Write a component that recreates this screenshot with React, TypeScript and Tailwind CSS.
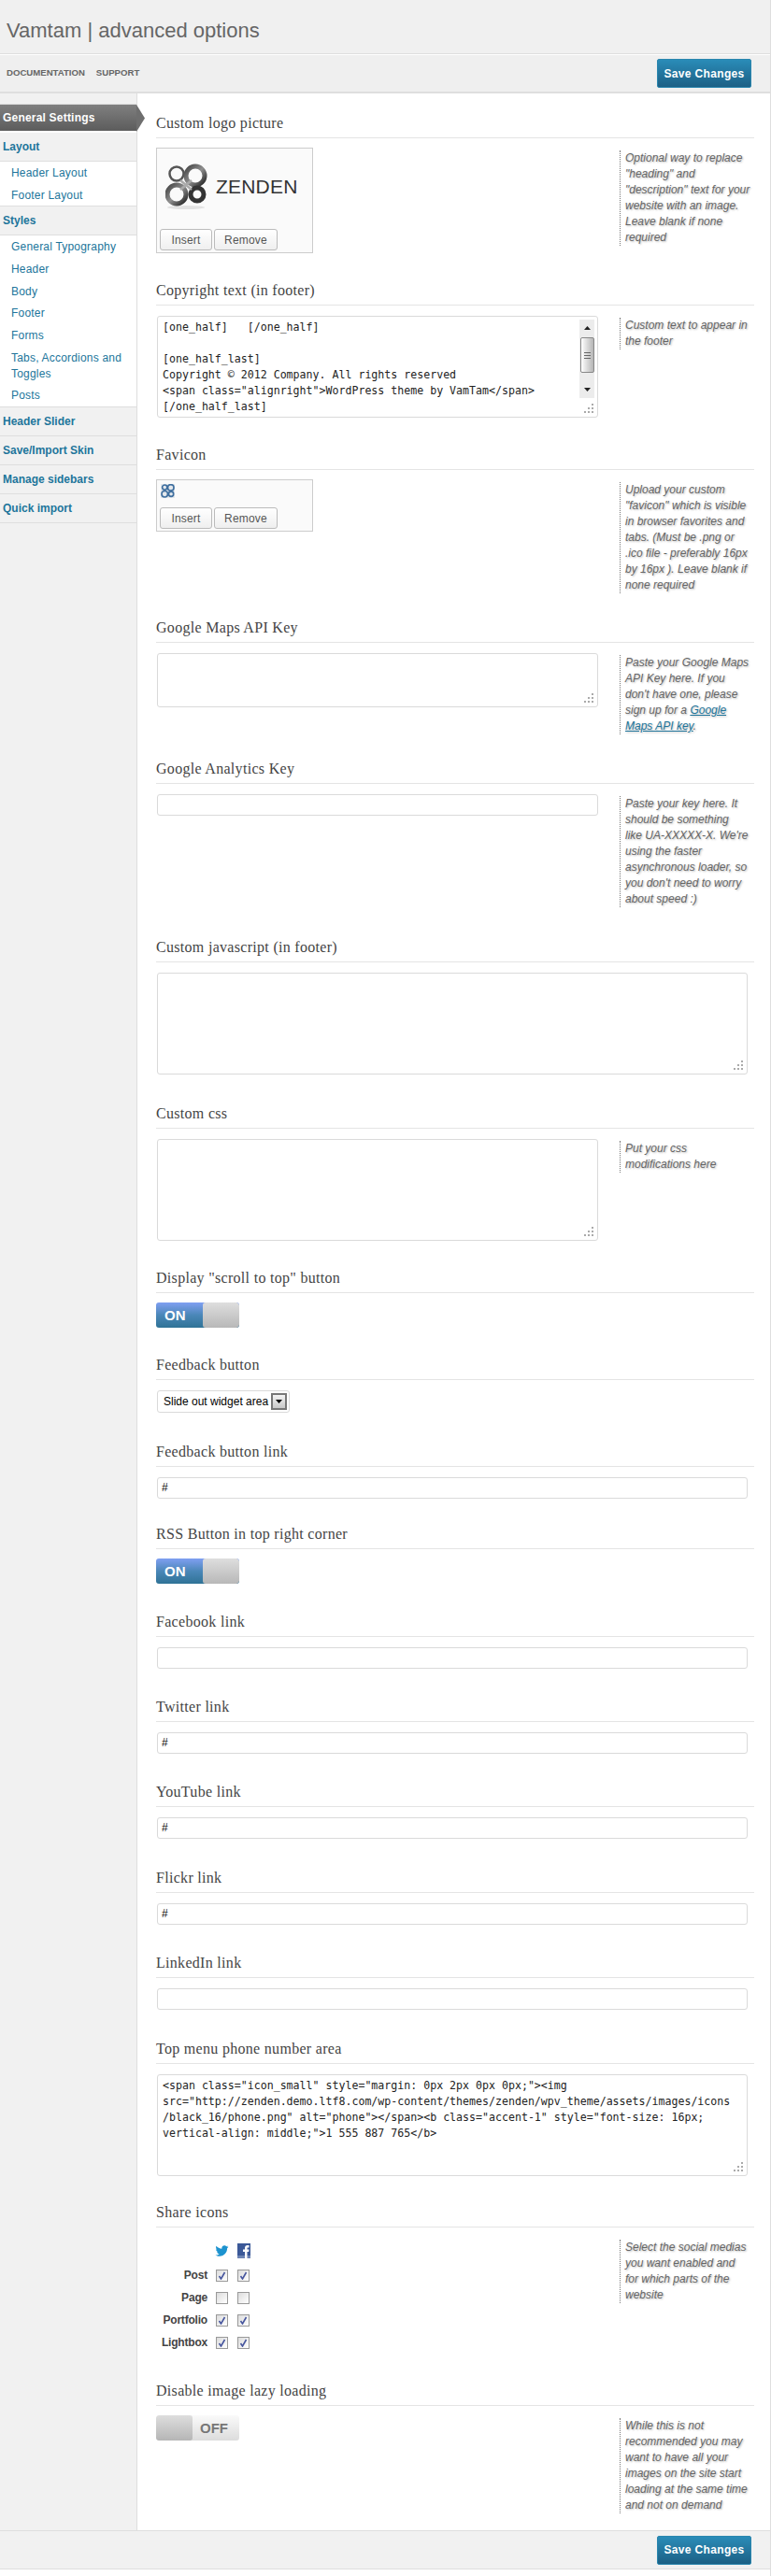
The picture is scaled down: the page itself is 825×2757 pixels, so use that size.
import type { ReactNode } from "react"
import { FaTwitter } from "react-icons/fa"

const SANS = "font-['Liberation_Sans',Arial,sans-serif]"

function Grip() {
  return (
    <svg className="absolute right-[4px] bottom-[4px]" width="10" height="10" viewBox="0 0 10 10">
      <g fill="#aaa">
        <rect x="8" y="0" width="2" height="2" />
        <rect x="8" y="4" width="2" height="2" />
        <rect x="4" y="4" width="2" height="2" />
        <rect x="8" y="8" width="2" height="2" />
        <rect x="4" y="8" width="2" height="2" />
        <rect x="0" y="8" width="2" height="2" />
      </g>
    </svg>
  )
}

function KnotMark({ small }: { small?: boolean }) {
  if (small) {
    return (
      <svg width="15" height="15" viewBox="0 0 44 46" className="bg-[#e4e8ec]">
        <g fill="none" stroke="#3f6f9f" strokeWidth="5">
          <circle cx="12" cy="11" r="8" />
          <circle cx="32" cy="12" r="10" />
          <circle cx="12" cy="33" r="10" />
          <circle cx="33" cy="33" r="8" />
        </g>
      </svg>
    )
  }
  return (
    <svg width="46" height="50" viewBox="0 0 46 50">
      <defs>
        <linearGradient id="knot" x1="0" y1="0" x2="1" y2="1">
          <stop offset="0" stopColor="#444" />
          <stop offset="0.5" stopColor="#8f8f8f" />
          <stop offset="1" stopColor="#222" />
        </linearGradient>
      </defs>
      <ellipse cx="22" cy="47" rx="20" ry="2" fill="#e2e2e2" />
      <g fill="none">
        <circle cx="12" cy="11" r="7.5" stroke="#555" strokeWidth="2.5" />
        <circle cx="32" cy="13" r="10" stroke="url(#knot)" strokeWidth="5" />
        <circle cx="12" cy="33" r="10" stroke="url(#knot)" strokeWidth="5" />
        <circle cx="34" cy="33" r="7" stroke="#333" strokeWidth="5" />
        <path d="M16 18 L28 28 M28 18 L16 28" stroke="#aaa" strokeWidth="2.5" />
      </g>
    </svg>
  )
}

function FacebookMark() {
  return (
    <svg width="14" height="16" viewBox="0 0 14 16" className="ml-[9px]">
      <rect width="14" height="16" fill="#3b5998" />
      <rect y="13" width="14" height="3" fill="#6d84b4" />
      <path d="M8 16 V9 H6 V6.5 H8 V5 C8 3 9 2 11 2 H12.5 V4.5 H11.3 C10.6 4.5 10.5 4.8 10.5 5.4 V6.5 H12.5 L12.2 9 H10.5 V16 Z" fill="#fff" />
    </svg>
  )
}

function SaveButton() {
  return (
    <button className="h-[31px] w-[101px] rounded-[2px] border border-[#2a86ae] bg-gradient-to-b from-[#2a8cb8] to-[#1c6085] text-center text-[12px] font-bold tracking-[0.35px] text-white">
      Save Changes
    </button>
  )
}

function Desc({ children }: { children: ReactNode }) {
  return (
    <div className="mt-[2px] w-[144px] shrink-0 self-start border-l border-dotted border-[#777] pl-[5px] text-[12px] leading-[17px] whitespace-pre-line text-[#666] italic [text-shadow:1px_1px_2px_#bbb]">
      {children}
    </div>
  )
}

function Section({ title, bodyClass, children, desc }: { title: string; bodyClass: string; children?: ReactNode; desc?: ReactNode }) {
  return (
    <section>
      <h3 className="flex h-[36px] items-end border-b border-[#e4e4e4] pb-[5px] font-['Liberation_Serif',serif] text-[16px] leading-[20px] tracking-[0.3px] text-[#444]">
        {title}
      </h3>
      <div className={`flex pt-[11px] ${bodyClass}`}>
        <div className={desc ? "w-[496px] shrink-0" : "w-full"}>{children}</div>
        {desc && <Desc>{desc}</Desc>}
      </div>
    </section>
  )
}

function TextBox({ className, lines, children }: { className: string; lines?: string[]; children?: ReactNode }) {
  return (
    <div className={`relative ml-px overflow-hidden rounded-[3px] border border-[#dadada] bg-white px-[5px] pt-[3px] font-['DejaVu_Sans_Mono',monospace] text-[11.6px] leading-[17px] whitespace-pre text-[#222] ${className}`}>
      {lines?.map((line, i) => (
        <div key={i} className="h-[17px]">{line}</div>
      ))}
      {children}
      <Grip />
    </div>
  )
}

function TextInput({ value, short }: { value?: string; short?: boolean }) {
  return (
    <div className={`ml-px h-[23px] rounded-[3px] border border-[#dadada] bg-white px-[4px] text-[12px] leading-[21px] text-black ${short ? "w-[472px]" : "w-[632px]"}`}>
      {value}
    </div>
  )
}

function UploadBox({ className, children }: { className: string; children: ReactNode }) {
  return (
    <div className={`-mt-px flex w-[168px] flex-col justify-between border border-[#ccc] bg-[#fafafa] px-[3px] pt-[4px] pb-[2px] ${className}`}>
      {children}
      <div className="flex gap-[2px]">
        <button className="h-[23px] w-[56px] rounded-[3px] border border-[#bbb] bg-gradient-to-b from-white to-[#efefef] text-[12px] tracking-[0.2px] text-[#555]">Insert</button>
        <button className="h-[23px] w-[68px] rounded-[3px] border border-[#bbb] bg-gradient-to-b from-white to-[#efefef] text-[12px] tracking-[0.2px] text-[#555]">Remove</button>
      </div>
    </div>
  )
}

function Toggle({ on }: { on?: boolean }) {
  if (on) {
    return (
      <div className="-mt-px flex h-[27px] w-[89px] overflow-hidden rounded-[3px] bg-gradient-to-b from-[#7f9ff2] via-[#4a87b8] to-[#2f7396]">
        <span className="w-[50px] pl-[9px] text-[15px] leading-[27px] font-bold text-white">ON</span>
        <span className="w-[39px] rounded-[3px] bg-gradient-to-b from-[#dedede] to-[#b8b8b8]" />
      </div>
    )
  }
  return (
    <div className="-mt-px flex h-[27px] w-[89px] overflow-hidden rounded-[3px] bg-gradient-to-b from-[#fafafa] to-[#dcdcdc]">
      <span className="w-[39px] rounded-[3px] bg-gradient-to-b from-[#dedede] to-[#b5b5b5]" />
      <span className="pl-[8px] text-[15px] leading-[27px] font-bold text-[#777]">OFF</span>
    </div>
  )
}

function Check({ on }: { on?: boolean }) {
  return (
    <span className="flex h-[13px] w-[13px] items-center justify-center border border-[#999] bg-gradient-to-br from-[#dcdcdc] to-white">
      {on && (
        <svg width="9" height="9" viewBox="0 0 9 9">
          <path d="M1.5 5 L3.5 8 L7.5 1" fill="none" stroke="#47569e" strokeWidth="1.6" />
        </svg>
      )}
    </span>
  )
}

function ShareRow({ label, on }: { label: string; on?: boolean }) {
  return (
    <div className="flex h-[24px] items-center">
      <span className="w-[55px] text-right text-[12px] font-bold tracking-[-0.2px] text-[#444]">{label}</span>
      <span className="ml-[9px]"><Check on={on} /></span>
      <span className="ml-[10px]"><Check on={on} /></span>
    </div>
  )
}

function NavGroup({ children }: { children: ReactNode }) {
  return (
    <div className="flex h-[31px] items-center border-b border-[#dedede] bg-[#f1f1f1] pl-[3px] text-[12px] font-bold text-[#21759b]">
      {children}
    </div>
  )
}

function NavItems({ items, className }: { items: string[]; className: string }) {
  return (
    <ul className={`border-b border-[#dedede] bg-white pt-px pl-[12px] text-[12px] leading-[17px] tracking-[0.2px] text-[#21759b] ${className}`}>
      {items.map((item) => (
        <li key={item} className="py-[3.35px]">{item}</li>
      ))}
    </ul>
  )
}

function Sidebar() {
  return (
    <aside className="w-[147px] shrink-0 border-r border-[#dedede] bg-[#f1f1f1] pt-[11px]">
      <div className="relative h-[31px] border-t border-[#dedede] border-b-2 border-b-white bg-gradient-to-b from-[#808080] to-[#5c5c5c] pl-[3px] text-[12px] leading-[28px] font-bold tracking-[0.2px] text-white">
        General Settings
        <span className="absolute top-0 left-full h-[29px] w-[9px] bg-[#6e6e6e] [clip-path:polygon(0_0,100%_50%,0_100%)]" />
      </div>
      <NavGroup>Layout</NavGroup>
      <NavItems className="h-[48px]" items={["Header Layout", "Footer Layout"]} />
      <NavGroup>Styles</NavGroup>
      <NavItems className="h-[184px]" items={["General Typography", "Header", "Body", "Footer", "Forms", "Tabs, Accordions and Toggles", "Posts"]} />
      <NavGroup>Header Slider</NavGroup>
      <NavGroup>Save/Import Skin</NavGroup>
      <NavGroup>Manage sidebars</NavGroup>
      <NavGroup>Quick import</NavGroup>
    </aside>
  )
}

export default function App() {
  return (
    <div className={`border-r border-[#dedede] bg-white pb-[7px] ${SANS}`}>
      <header className="h-[58px] border-b border-[#dedede] bg-[#f0f0f0] pt-[18px] pl-[7px] text-[22px] leading-[30px] text-[#666]">
        Vamtam | advanced options
      </header>
      <div className="flex h-[42px] items-center justify-between border-t border-white border-b-2 border-b-[#dedede] bg-[#efefef] pr-[20px] pl-[7px]">
        <nav className="flex gap-[12px] text-[9.6px] font-bold text-[#666]">
          <span>DOCUMENTATION</span>
          <span>SUPPORT</span>
        </nav>
        <SaveButton />
      </div>
      <div className="flex">
        <Sidebar />
        <main className="flex-1 pt-[12px] pr-[20px] pl-[20px]">
          <Section
            title="Custom logo picture"
            bodyClass="h-[143px]"
            desc={'Optional way to replace\n"heading" and\n"description" text for your\nwebsite with an image.\nLeave blank if none\nrequired'}
          >
            <UploadBox className="h-[113px]">
              <div className="flex items-center gap-[8px] pt-[12px] pl-[6px]">
                <KnotMark />
                <span className="text-[21px] tracking-[0.2px] text-[#333]">ZENDEN</span>
              </div>
            </UploadBox>
          </Section>

          <Section title="Copyright text (in footer)" bodyClass="h-[140px]" desc={"Custom text to appear in\nthe footer"}>
            <TextBox
              className="h-[109px] w-[472px]"
              lines={[
                "[one_half]   [/one_half]",
                "",
                "[one_half_last]",
                "Copyright © 2012 Company. All rights reserved",
                '<span class="alignright">WordPress theme by VamTam</span>',
                "[/one_half_last]",
              ]}
            >
              <div className="absolute top-[3px] right-[3px] flex h-[84px] w-[16px] flex-col items-center justify-between bg-[#ececec]">
                <svg className="mt-[7px]" width="7" height="4" viewBox="0 0 7 4"><path d="M3.5 0 L7 4 H0 Z" fill="#222" /></svg>
                <div className="absolute top-[19px] flex h-[38px] w-[15px] flex-col items-center justify-center gap-[2px] rounded-[2px] border border-[#888] bg-gradient-to-r from-white to-[#b5b5b5]">
                  <span className="h-px w-[7px] bg-[#666]" />
                  <span className="h-px w-[7px] bg-[#666]" />
                  <span className="h-px w-[7px] bg-[#666]" />
                </div>
                <svg className="mb-[7px]" width="7" height="4" viewBox="0 0 7 4"><path d="M0 0 H7 L3.5 4 Z" fill="#222" /></svg>
              </div>
            </TextBox>
          </Section>

          <Section
            title="Favicon"
            bodyClass="h-[149px]"
            desc={'Upload your custom\n"favicon" which is visible\nin browser favorites and\ntabs. (Must be .png or\n.ico file - preferably 16px\nby 16px ). Leave blank if\nnone required'}
          >
            <UploadBox className="h-[56px]">
              <div className="pl-[1px]"><KnotMark small /></div>
            </UploadBox>
          </Section>

          <Section
            title="Google Maps API Key"
            bodyClass="h-[115px]"
            desc={<>{"Paste your Google Maps\nAPI Key here. If you\ndon't have one, please\nsign up for a "}<a href="#" className="text-[#21759b] underline">{"Google\nMaps API key"}</a>.</>}
          >
            <TextBox className="h-[58px] w-[472px]" />
          </Section>

          <Section
            title="Google Analytics Key"
            bodyClass="h-[155px]"
            desc={"Paste your key here. It\nshould be something\nlike UA-XXXXX-X. We're\nusing the faster\nasynchronous loader, so\nyou don't need to worry\nabout speed :)"}
          >
            <TextInput short />
          </Section>

          <Section title="Custom javascript (in footer)" bodyClass="h-[142px]">
            <TextBox className="h-[109px] w-[632px]" />
          </Section>

          <Section title="Custom css" bodyClass="h-[140px]" desc={"Put your css\nmodifications here"}>
            <TextBox className="h-[109px] w-[472px]" />
          </Section>

          <Section title={'Display "scroll to top" button'} bodyClass="h-[57px]">
            <Toggle on />
          </Section>

          <Section title="Feedback button" bodyClass="h-[57px]">
            <div className="relative ml-px h-[24px] w-[142px] rounded-[3px] border border-[#dadada] bg-white pl-[6px] text-[12px] leading-[22px] text-black">
              Slide out widget area
              <span className="absolute top-[2px] right-[2px] flex h-[18px] w-[17px] items-center justify-center border-2 border-[#777] bg-gradient-to-b from-[#f4f4f4] to-[#c8c8c8]">
                <svg width="7" height="4" viewBox="0 0 7 4"><path d="M0 0 H7 L3.5 4 Z" fill="#000" /></svg>
              </span>
            </div>
          </Section>

          <Section title="Feedback button link" bodyClass="h-[52px]">
            <TextInput value="#" />
          </Section>

          <Section title="RSS Button in top right corner" bodyClass="h-[58px]">
            <Toggle on />
          </Section>

          <Section title="Facebook link" bodyClass="h-[55px]">
            <TextInput />
          </Section>

          <Section title="Twitter link" bodyClass="h-[55px]">
            <TextInput value="#" />
          </Section>

          <Section title="YouTube link" bodyClass="h-[56px]">
            <TextInput value="#" />
          </Section>

          <Section title="Flickr link" bodyClass="h-[55px]">
            <TextInput value="#" />
          </Section>

          <Section title="LinkedIn link" bodyClass="h-[56px]">
            <TextInput />
          </Section>

          <Section title="Top menu phone number area" bodyClass="h-[139px]">
            <TextBox
              className="h-[109px] w-[632px]"
              lines={[
                '<span class="icon_small" style="margin: 0px 2px 0px 0px;"><img',
                'src="http://zenden.demo.ltf8.com/wp-content/themes/zenden/wpv_theme/assets/images/icons',
                '/black_16/phone.png" alt="phone"></span><b class="accent-1" style="font-size: 16px;',
                'vertical-align: middle;">1 555 887 765</b>',
              ]}
            />
          </Section>

          <Section
            title="Share icons"
            bodyClass="h-[155px]"
            desc={"Select the social medias\nyou want enabled and\nfor which parts of the\nwebsite"}
          >
            <div className="flex h-[28px] items-center pl-[63px]">
              <FaTwitter className="h-[14px] w-[15px] text-[#1d93cf]" />
              <FacebookMark />
            </div>
            <ShareRow label="Post" on />
            <ShareRow label="Page" />
            <ShareRow label="Portfolio" on />
            <ShareRow label="Lightbox" on />
          </Section>

          <Section
            title="Disable image lazy loading"
            bodyClass="h-[133px]"
            desc={"While this is not\nrecommended you may\nwant to have all your\nimages on the site start\nloading at the same time\nand not on demand"}
          >
            <Toggle />
          </Section>
        </main>
      </div>
      <footer className="flex h-[42px] items-center justify-end border-y border-[#dedede] bg-[#f1f1f1] pr-[20px]">
        <SaveButton />
      </footer>
    </div>
  )
}
